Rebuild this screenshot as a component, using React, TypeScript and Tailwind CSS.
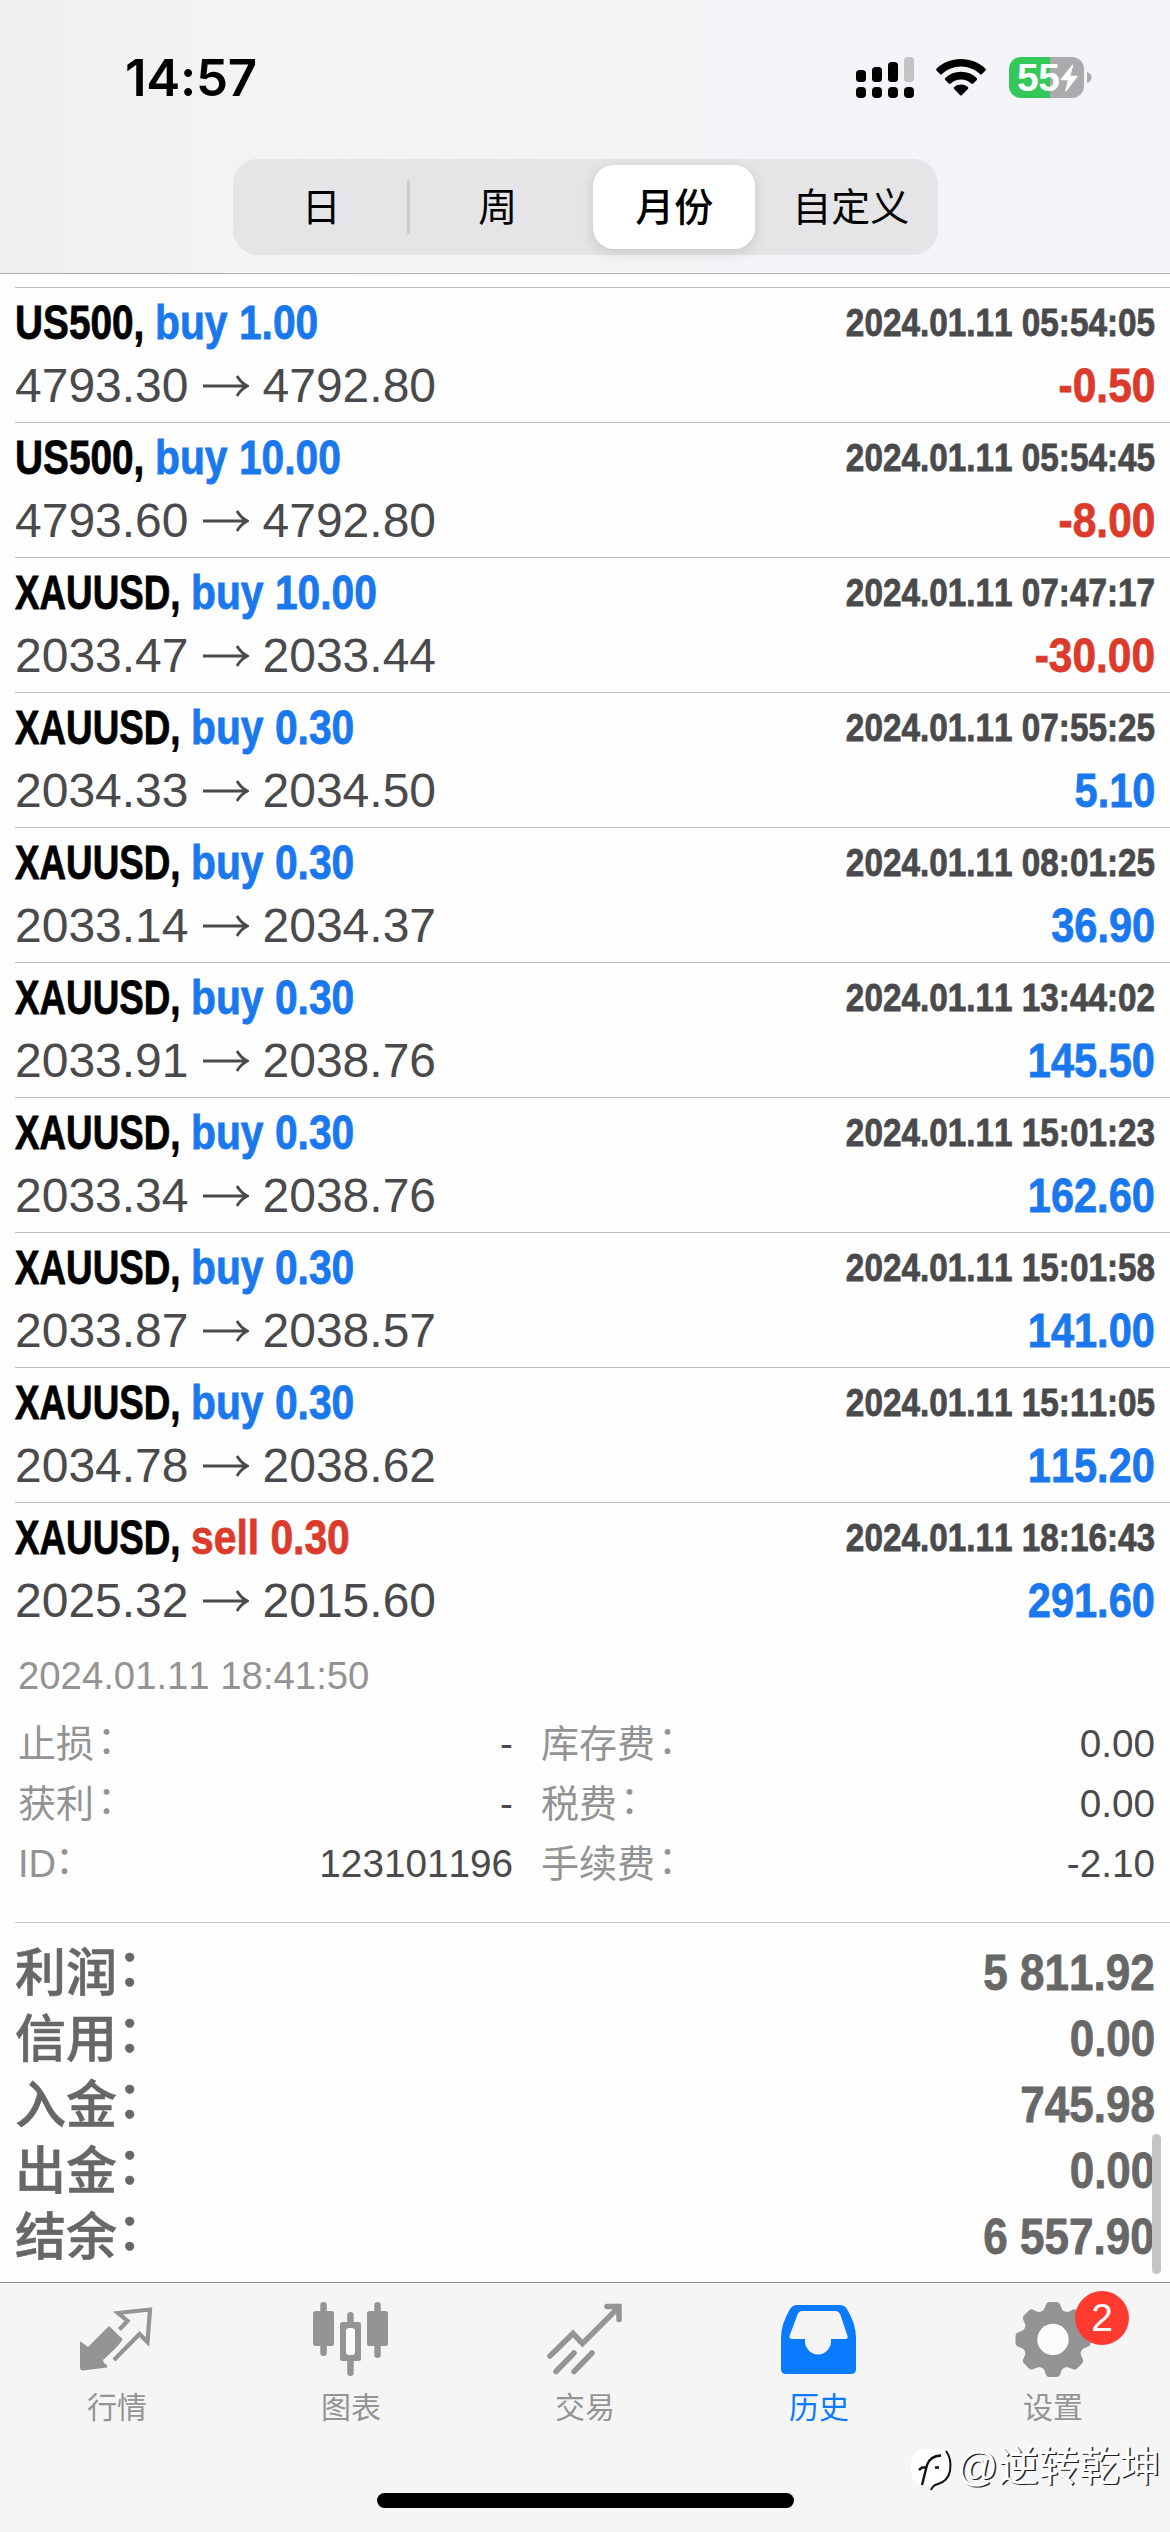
// src/App.tsx
import { useState } from "react";
import type { ReactNode } from "react";

type Deal = {
  symbol: string;
  side: "buy" | "sell";
  volume: string;
  open: string;
  close: string;
  time: string;
  profit: string;
};

const deals: Deal[] = [
  { symbol: "US500", side: "buy", volume: "1.00", open: "4793.30", close: "4792.80", time: "2024.01.11 05:54:05", profit: "-0.50" },
  { symbol: "US500", side: "buy", volume: "10.00", open: "4793.60", close: "4792.80", time: "2024.01.11 05:54:45", profit: "-8.00" },
  { symbol: "XAUUSD", side: "buy", volume: "10.00", open: "2033.47", close: "2033.44", time: "2024.01.11 07:47:17", profit: "-30.00" },
  { symbol: "XAUUSD", side: "buy", volume: "0.30", open: "2034.33", close: "2034.50", time: "2024.01.11 07:55:25", profit: "5.10" },
  { symbol: "XAUUSD", side: "buy", volume: "0.30", open: "2033.14", close: "2034.37", time: "2024.01.11 08:01:25", profit: "36.90" },
  { symbol: "XAUUSD", side: "buy", volume: "0.30", open: "2033.91", close: "2038.76", time: "2024.01.11 13:44:02", profit: "145.50" },
  { symbol: "XAUUSD", side: "buy", volume: "0.30", open: "2033.34", close: "2038.76", time: "2024.01.11 15:01:23", profit: "162.60" },
  { symbol: "XAUUSD", side: "buy", volume: "0.30", open: "2033.87", close: "2038.57", time: "2024.01.11 15:01:58", profit: "141.00" },
  { symbol: "XAUUSD", side: "buy", volume: "0.30", open: "2034.78", close: "2038.62", time: "2024.01.11 15:11:05", profit: "115.20" },
  { symbol: "XAUUSD", side: "sell", volume: "0.30", open: "2025.32", close: "2015.60", time: "2024.01.11 18:16:43", profit: "291.60" },
];

const details = [
  ["止损", "-", "库存费", "0.00"],
  ["获利", "-", "税费", "0.00"],
  ["ID", "123101196", "手续费", "-2.10"],
];

const totals = [
  ["利润", "5 811.92"],
  ["信用", "0.00"],
  ["入金", "745.98"],
  ["出金", "0.00"],
  ["结余", "6 557.90"],
];

const periods = ["日", "周", "月份", "自定义"];

// condensed bold, squeezed horizontally from the regular width
const CONDENSED = "inline-block font-bold whitespace-nowrap [-webkit-text-stroke:0.8px_currentColor]";

// Status bar: time, dual sim signal, wifi, battery
function StatusBar() {
  return (
    <div className="flex justify-between h-[159px] pl-[125px] pr-[78px]">
      <span className="mt-[48px] h-[60px] leading-[60px] text-[51px] font-semibold tracking-[-0.3px] text-black font-['Inter',sans-serif]">
        14:57
      </span>
      <div className="flex mt-[57px] h-[41px]">
        <svg width="58" height="41" viewBox="0 0 58 41" className="mr-[22px]">
          <rect x="0" y="13" width="10" height="12" rx="3.5" />
          <rect x="16" y="10" width="10" height="15" rx="3.5" />
          <rect x="32" y="5" width="10" height="20" rx="3.5" />
          <rect x="48" y="0" width="10" height="25" rx="3.5" fill="#c3c3c4" />
          <rect x="0" y="30" width="10" height="11" rx="4" />
          <rect x="16" y="30" width="10" height="11" rx="4" />
          <rect x="32" y="30" width="10" height="11" rx="4" />
          <rect x="48" y="30" width="10" height="11" rx="4" />
        </svg>
        <svg width="50" height="41" viewBox="0 0 50 41" className="mr-[23px]">
          <path d="M25 2 C34.5 2 43 5.500 49.300 11.500 Q50.300 12.600 49.300 13.700 L46 17 Q45 18 43.900 17 C38.800 12.300 32.300 9.500 25 9.500 C17.700 9.500 11.200 12.300 6.100 17 Q5 18 4 17 L0.700 13.700 Q-0.300 12.600 0.700 11.500 C7 5.500 15.500 2 25 2 Z" />
          <path d="M25 14.800 C31 14.800 36.500 17 40.700 20.900 Q41.700 22 40.700 23.100 L37.400 26.400 Q36.300 27.300 35.200 26.400 C32.400 24 28.900 22.500 25 22.500 C21.100 22.500 17.600 24 14.800 26.400 Q13.700 27.300 12.600 26.400 L9.300 23.100 Q8.300 22 9.300 20.900 C13.500 17 19 14.800 25 14.800 Z" />
          <path d="M25 27.600 Q28.800 27.600 31.900 30 Q32.900 31 31.900 32 L26 38 Q25 39 24 38 L18.100 32 Q17.100 31 18.100 30 Q21.200 27.600 25 27.600 Z" />
        </svg>
        <div className="flex items-center w-[75px] h-[41px] pl-[8px] rounded-[12px] bg-linear-to-r from-[#34c759] from-55% to-[#ababad] to-55%">
          <span className="w-[43px] text-[39px] leading-[43px] font-bold tracking-[-0.5px] text-white">55</span>
          <svg width="18" height="28" viewBox="0 0 18 28" fill="#fff">
            <path d="M12.500 0.500 L0.800 15 Q0.200 16.200 1.400 16.200 H7.800 L5.200 27 Q5.500 28 6.400 27.200 L17.300 13 Q17.800 11.700 16.500 11.700 H10.400 L13.300 1.200 Q13.300 0.200 12.500 0.500 Z" />
          </svg>
        </div>
        <svg width="5" height="41" viewBox="0 0 5 41" className="ml-[3px]">
          <path d="M0 15 Q4.500 16.500 4.500 20.500 T0 26 Z" fill="#ababad" />
        </svg>
      </div>
    </div>
  );
}

function PriceArrow() {
  return (
    <svg width="46" height="24" viewBox="0 0 46 24" className="mx-[14px]" fill="none" stroke="#4a4a4c" strokeWidth="2.800">
      <path d="M0 12 H44 M34 2 Q38 9 44.500 12 Q38 15 34 22" />
    </svg>
  );
}

function DealRow({ deal }: { deal: Deal }) {
  const isIndex = deal.symbol === "US500";
  const isLoss = deal.profit.startsWith("-");

  return (
    <div className="h-[135px] ml-[15px] pr-[15px] pt-[3px] border-t border-[#bcbcbe]">
      <div className="flex items-center justify-between h-[63px]">
        <div className="flex text-[48px] leading-[63px]">
          <div className={isIndex ? "w-[140px]" : "w-[176px]"}>
            <span className={`origin-left text-black ${CONDENSED} ${isIndex ? "scale-x-[0.808]" : "scale-x-[0.766]"}`}>
              {deal.symbol},
            </span>
          </div>
          <span className={`origin-left scale-x-[0.85] ${CONDENSED} ${deal.side === "buy" ? "text-[#1a78ee]" : "text-[#dc3b2c]"}`}>
            {deal.side} {deal.volume}
          </span>
        </div>
        <span className={`origin-right scale-x-[0.854] text-[39px] leading-[63px] text-[#4a4a4c] ${CONDENSED}`}>{deal.time}</span>
      </div>
      <div className="flex items-center justify-between h-[63px]">
        <div className="flex items-center text-[48px] leading-[63px] text-[#4a4a4c]">
          <span>{deal.open}</span>
          <PriceArrow />
          <span>{deal.close}</span>
        </div>
        <span className={`origin-right text-[48px] leading-[63px] ${CONDENSED} ${isLoss ? "scale-x-[0.885] text-[#dc3b2c]" : "scale-x-[0.865] text-[#1a78ee]"}`}>
          {deal.profit}
        </span>
      </div>
    </div>
  );
}

function DetailLabel({ text }: { text: string }) {
  return (
    <span className="flex">
      {text}
      <span className={text === "ID" ? "-mt-[4px] -ml-[1px]" : "-mt-[4px] ml-[3px]"}>：</span>
    </span>
  );
}

function TabItem({ label, active, children }: { label: string; active?: boolean; children: ReactNode }) {
  return (
    <div className={`flex flex-col items-center flex-1 pt-[15px] ${active ? "text-[#0a7aff]" : "text-[#949494]"}`}>
      {children}
      <span className="mt-[10px] h-[40px] leading-[40px] text-[30px]">{label}</span>
    </div>
  );
}

const teeth = [0, 45, 90, 135, 180, 225, 270, 315];

export default function App() {
  const [period, setPeriod] = useState("月份");

  return (
    <div className="relative flex flex-col w-[1170px] h-[2532px] overflow-hidden bg-[#fefefe] font-['Liberation_Sans','Noto_Sans_CJK_SC',sans-serif] [font-kerning:none]">
      {/* Header */}
      <header className="h-[274px] border-b border-[#b2b2b4] bg-linear-to-r from-[#efeff0] via-[#f5f5f6] via-30% to-[#f3f4f9]">
        <StatusBar />
        <div className="flex w-[705px] h-[96px] ml-[233px] rounded-[25px] bg-[#e5e5e7]">
          {periods.map((p, i) => (
            <div key={p} className="relative flex shrink-0 w-[176.5px] items-center justify-center">
              {i === 1 && <div className="absolute left-[-3px] top-[21px] w-[3px] h-[54px] rounded bg-[#cdcdcf]" />}
              <button
                onClick={() => setPeriod(p)}
                className={`w-[162px] h-[84px] pt-[3px] rounded-[21px] text-[39px] text-black whitespace-nowrap ${
                  p === period ? "bg-white font-medium shadow-[0_4px_14px_rgba(0,0,0,0.13)]" : ""
                }`}
              >
                {p}
              </button>
            </div>
          ))}
        </div>
      </header>

      {/* Deals */}
      <main className="relative h-[2008px] pt-[13px]">
        {deals.map((d) => (
          <DealRow key={d.time} deal={d} />
        ))}

        <div className="h-[285px] pl-[18px] pr-[15px] pt-[9px] text-[38px] text-[#939393]">
          <div className="h-[60px] leading-[60px] text-[38.3px]">2024.01.11 18:41:50</div>
          <div className="mt-[8px]">
            {details.map(([l1, v1, l2, v2]) => (
              <div key={l1} className="flex h-[60px] leading-[60px]">
                <div className="flex justify-between w-[495px]">
                  <DetailLabel text={l1} />
                  <span className="text-[38.7px] text-[#4a4a4c]">{v1}</span>
                </div>
                <div className="flex flex-1 justify-between ml-[28px]">
                  <DetailLabel text={l2} />
                  <span className="text-[38.7px] text-[#4a4a4c]">{v2}</span>
                </div>
              </div>
            ))}
          </div>
        </div>

        {/* Totals */}
        <div className="ml-[15px] pr-[15px] pt-[17px] border-t border-[#c8c8c8] text-[#676767]">
          {totals.map(([label, value]) => (
            <div key={label} className="flex justify-between h-[66px] leading-[66px]">
              <span className="flex mt-[1px] text-[51px] font-medium [-webkit-text-stroke:0.6px_currentColor]">
                {label}
                <span className="-mt-[5px]">：</span>
              </span>
              <span className={`origin-right scale-x-[0.88] text-[50px] ${CONDENSED}`}>{value}</span>
            </div>
          ))}
        </div>
        <div className="absolute left-[1152px] top-[1860px] w-[9px] h-[140px] rounded-full bg-[#c4c4c4]" />
      </main>

      {/* Tab bar */}
      <nav className="relative h-[250px] border-t border-[#8e8e8e] bg-[#f5f5f5]">
        <div className="flex">
          <TabItem label="行情">
            <svg width="90" height="80" viewBox="72 28 90 80">
              <path d="M119.500 59.500 L127.500 51 L118 43 L150 39.500 L147.500 72 L139.500 64 L114 90" fill="none" stroke="currentColor" strokeWidth="4.200" />
              <path d="M109 56 L122.500 69 Q122 73 103 90 Q103 93 107 95 V97.500 L83 100.500 Q80 100.500 80 97 V71.500 Q81.500 72 88 77 Z" fill="currentColor" />
            </svg>
          </TabItem>
          <TabItem label="图表">
            <svg width="90" height="80" viewBox="306 28 90 80" fill="currentColor">
              <rect x="313" y="41" width="21" height="35" rx="2.500" />
              <rect x="320.300" y="32" width="6.500" height="54" rx="3.200" />
              <rect x="367" y="41" width="21" height="35" rx="2.500" />
              <rect x="374.300" y="32" width="6.500" height="56" rx="3.200" />
              <rect x="347.200" y="42" width="6.500" height="64" rx="3.200" />
              <rect x="340" y="52" width="21" height="39" rx="2.500" />
              <rect x="346" y="58" width="9" height="27" rx="3" fill="#fbfbfb" />
            </svg>
          </TabItem>
          <TabItem label="交易">
            <svg width="90" height="80" viewBox="540 28 90 80" fill="none" stroke="currentColor" strokeWidth="5.500" strokeLinecap="round">
              <path d="M550 86 L573 63.500 L582.500 73.500 L618 38" />
              <path d="M607 36.500 H619 V49.500" />
              <path d="M556 101.500 L574 83 M574 101.500 L592 83" />
            </svg>
          </TabItem>
          <TabItem label="历史" active>
            <svg width="90" height="80" viewBox="774 28 90 80" fill="currentColor" fillRule="evenodd">
              <path d="M797 35 H840 Q844.500 35 847 39 Q856 54 856 68 V99 Q856 104 851 104 H786 Q781 104 781 99 V68 Q781 54 790 39 Q792.500 35 797 35 Z M789.500 66 Q789 69 792 69 H805 V71 A13 13.500 0 0 0 831 71 V69 H845 Q848.500 69 847.500 66 L840.500 45 Q839 41 835 41 H802 Q799 41 797.500 44.500 Z" />
            </svg>
          </TabItem>
          <TabItem label="设置">
            <div className="relative">
              <svg width="90" height="80" viewBox="-45 -41.500 90 80" fill="currentColor">
                <circle r="30.500" />
                {teeth.map((a) => (
                  <path key={a} transform={`rotate(${a})`} d="M-12 -27 Q-8.500 -29.500 -7.500 -34 Q-6.500 -37.500 -3.500 -37.500 H3.500 Q6.500 -37.500 7.500 -34 Q8.500 -29.500 12 -27 Z" />
                ))}
                <circle r="15.700" fill="#fcfcfc" />
              </svg>
              <span className="absolute left-[67px] top-[-7px] w-[54px] h-[54px] rounded-full bg-[#ff3b30] text-white text-[39px] leading-[54px] text-center">
                2
              </span>
            </div>
          </TabItem>
        </div>

        {/* Home indicator */}
        <div className="absolute left-[377px] top-[210px] w-[417px] h-[15px] rounded-full bg-black" />

        {/* Watermark */}
        <div className="absolute left-[910px] top-[158px] flex items-center h-[52px] text-white">
          <svg width="44" height="48" viewBox="0 0 44 48" className="mr-[3px]">
            <path d="M13 6 H28 Q39 7 39 20 Q39 38 25 42 L21 47 L20 42 H12 Q1 40 1 25 Q1 7 13 6 Z" fill="#fff" />
            <path d="M36 8 Q42 16 40 28 Q38 38 28 41 Q23 42 21 47" fill="none" stroke="#111" strokeWidth="2" />
            <path d="M12 42 L17 22 Q20 13 31 12.500 M9 27 L12 24.500 H17 M25 24.500 H29" fill="none" stroke="#111" strokeWidth="2.400" />
          </svg>
          <span className="text-[40.500px] leading-[52px] whitespace-nowrap [text-shadow:1.5px_1px_0_#222]">@逆转乾坤</span>
        </div>
      </nav>
    </div>
  );
}
